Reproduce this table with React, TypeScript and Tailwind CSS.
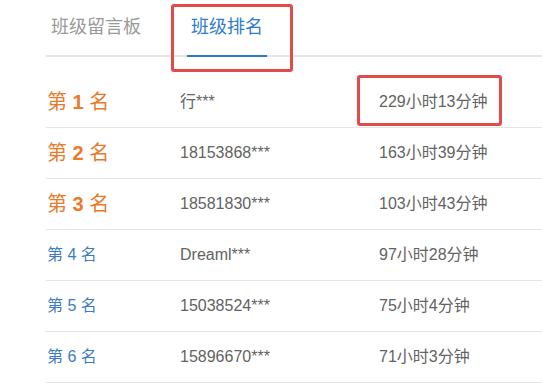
import React from "react";

const rows = [
  { rank: 1, name: "行***", time: "229小时13分钟" },
  { rank: 2, name: "18153868***", time: "163小时39分钟" },
  { rank: 3, name: "18581830***", time: "103小时43分钟" },
  { rank: 4, name: "Dreaml***", time: "97小时28分钟" },
  { rank: 5, name: "15038524***", time: "75小时4分钟" },
  { rank: 6, name: "15896670***", time: "71小时3分钟" },
];

const font = { fontFamily: '"Liberation Sans", "Noto Sans CJK SC", sans-serif' };

export default function App() {
  return (
    <div className="w-[542px] h-[385px] bg-white overflow-hidden pl-[46px]" style={font}>
      {/* Tabs */}
      <div className="flex h-[57px] border-b-2 border-[#e6e6e6]">
        <div className="pl-[5px] pt-[15px] text-[18px] leading-[24px] text-[#999999]">班级留言板</div>
        <div className="relative ml-[46px] px-[4px] pt-[15px] text-[18px] leading-[24px] text-[#2f7bcc]">
          班级排名
          <span className="absolute left-0 right-0 bottom-[-2px] h-[2px] bg-[#2a78cf]" />
          <span className="absolute left-[-16px] right-[-26px] top-[4px] bottom-[-17px] border-[3px] border-[#e54a4a] rounded-[3px]" />
        </div>
      </div>

      {/* Ranking list */}
      <div className="mt-[20px]">
        {rows.map((r) => (
          <div key={r.rank} className="flex items-center h-[51px] border-b border-[#e6e6e6] text-[16px] text-[#636363]">
            <div className="w-[134px] pl-[1px]">
              {r.rank <= 3 ? (
                <span className="text-[20px] text-[#ea7a2b]">
                  第 <span className="font-bold">{r.rank}</span> 名
                </span>
              ) : (
                <span className="text-[16px] text-[#3a7cc6]">第 {r.rank} 名</span>
              )}
            </div>
            <div className="w-[199px]">{r.name}</div>
            <div className="relative">
              {r.time}
              {r.rank === 1 && (
                <span className="absolute left-[-22px] w-[145px] top-[-15px] bottom-[-12px] border-[3px] border-[#e54a4a] rounded-[3px]" />
              )}
            </div>
          </div>
        ))}
      </div>
    </div>
  );
}
